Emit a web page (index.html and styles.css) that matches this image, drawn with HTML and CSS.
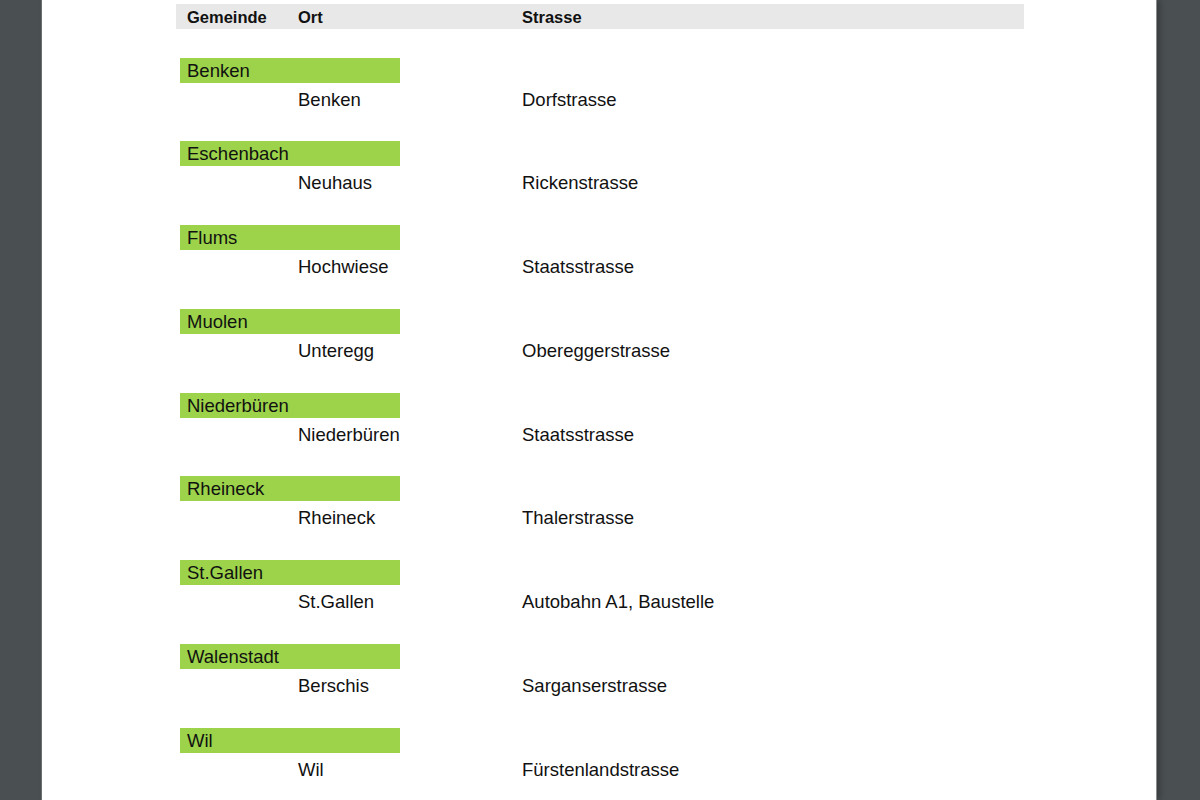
FILE: index.html
```html
<!DOCTYPE html>
<html lang="de">
<head>
<meta charset="utf-8">
<title>Baustellen</title>
<link rel="stylesheet" href="styles.css">
</head>
<body>
<div class="page">
  <div class="table-head">
    <div class="col-gem">Gemeinde</div>
    <div class="col-ort">Ort</div>
    <div class="col-str">Strasse</div>
  </div>
  <div class="groups">
    <div class="group">
      <div class="gem-bar">Benken</div>
      <div class="row"><div class="col-ort">Benken</div><div class="col-str">Dorfstrasse</div></div>
    </div>
    <div class="group">
      <div class="gem-bar">Eschenbach</div>
      <div class="row"><div class="col-ort">Neuhaus</div><div class="col-str">Rickenstrasse</div></div>
    </div>
    <div class="group">
      <div class="gem-bar">Flums</div>
      <div class="row"><div class="col-ort">Hochwiese</div><div class="col-str">Staatsstrasse</div></div>
    </div>
    <div class="group">
      <div class="gem-bar">Muolen</div>
      <div class="row"><div class="col-ort">Unteregg</div><div class="col-str">Obereggerstrasse</div></div>
    </div>
    <div class="group">
      <div class="gem-bar">Niederbüren</div>
      <div class="row"><div class="col-ort">Niederbüren</div><div class="col-str">Staatsstrasse</div></div>
    </div>
    <div class="group">
      <div class="gem-bar">Rheineck</div>
      <div class="row"><div class="col-ort">Rheineck</div><div class="col-str">Thalerstrasse</div></div>
    </div>
    <div class="group">
      <div class="gem-bar">St.Gallen</div>
      <div class="row"><div class="col-ort">St.Gallen</div><div class="col-str">Autobahn A1, Baustelle</div></div>
    </div>
    <div class="group">
      <div class="gem-bar">Walenstadt</div>
      <div class="row"><div class="col-ort">Berschis</div><div class="col-str">Sarganserstrasse</div></div>
    </div>
    <div class="group">
      <div class="gem-bar">Wil</div>
      <div class="row"><div class="col-ort">Wil</div><div class="col-str">Fürstenlandstrasse</div></div>
    </div>
  </div>
</div>
</body>
</html>
```
FILE: styles.css
```css
html, body {
  margin: 0;
  padding: 0;
  height: 100%;
  overflow: hidden;
}
body {
  background: #4a4f52;
  font-family: "Liberation Sans", Arial, sans-serif;
  color: #111111;
}
.page {
  margin-left: 42px;
  width: 1114px;
  height: 800px;
  background: #ffffff;
  box-shadow: -1px 0 0 #6b6f70, 1px 0 0 #8a8d8e, 4px 0 6px rgba(0,0,0,0.25);
  padding-top: 4px;
  box-sizing: border-box;
}
.table-head {
  margin-left: 134px;
  width: 848px;
  height: 25px;
  box-sizing: border-box;
  padding-top: 2px;
  background: #e8e8e8;
  display: flex;
  align-items: center;
  font-weight: bold;
  font-size: 16.5px;
  line-height: 23px;
}
.table-head .col-gem {
  padding-left: 11px;
  width: 111px;
}
.table-head .col-ort {
  width: 224px;
}
.groups {
  margin-top: 28.5px;
}
.group {
  margin-bottom: 24.75px;
}
.gem-bar {
  margin-left: 138px;
  width: 220px;
  height: 25px;
  box-sizing: border-box;
  padding-left: 7px;
  background: #9cd34a;
  font-size: 18.5px;
  line-height: 25px;
}
.row {
  height: 34px;
  display: flex;
  align-items: center;
  padding-left: 256px;
  font-size: 18.5px;
  line-height: 34px;
}
.row .col-ort {
  width: 224px;
}
```
